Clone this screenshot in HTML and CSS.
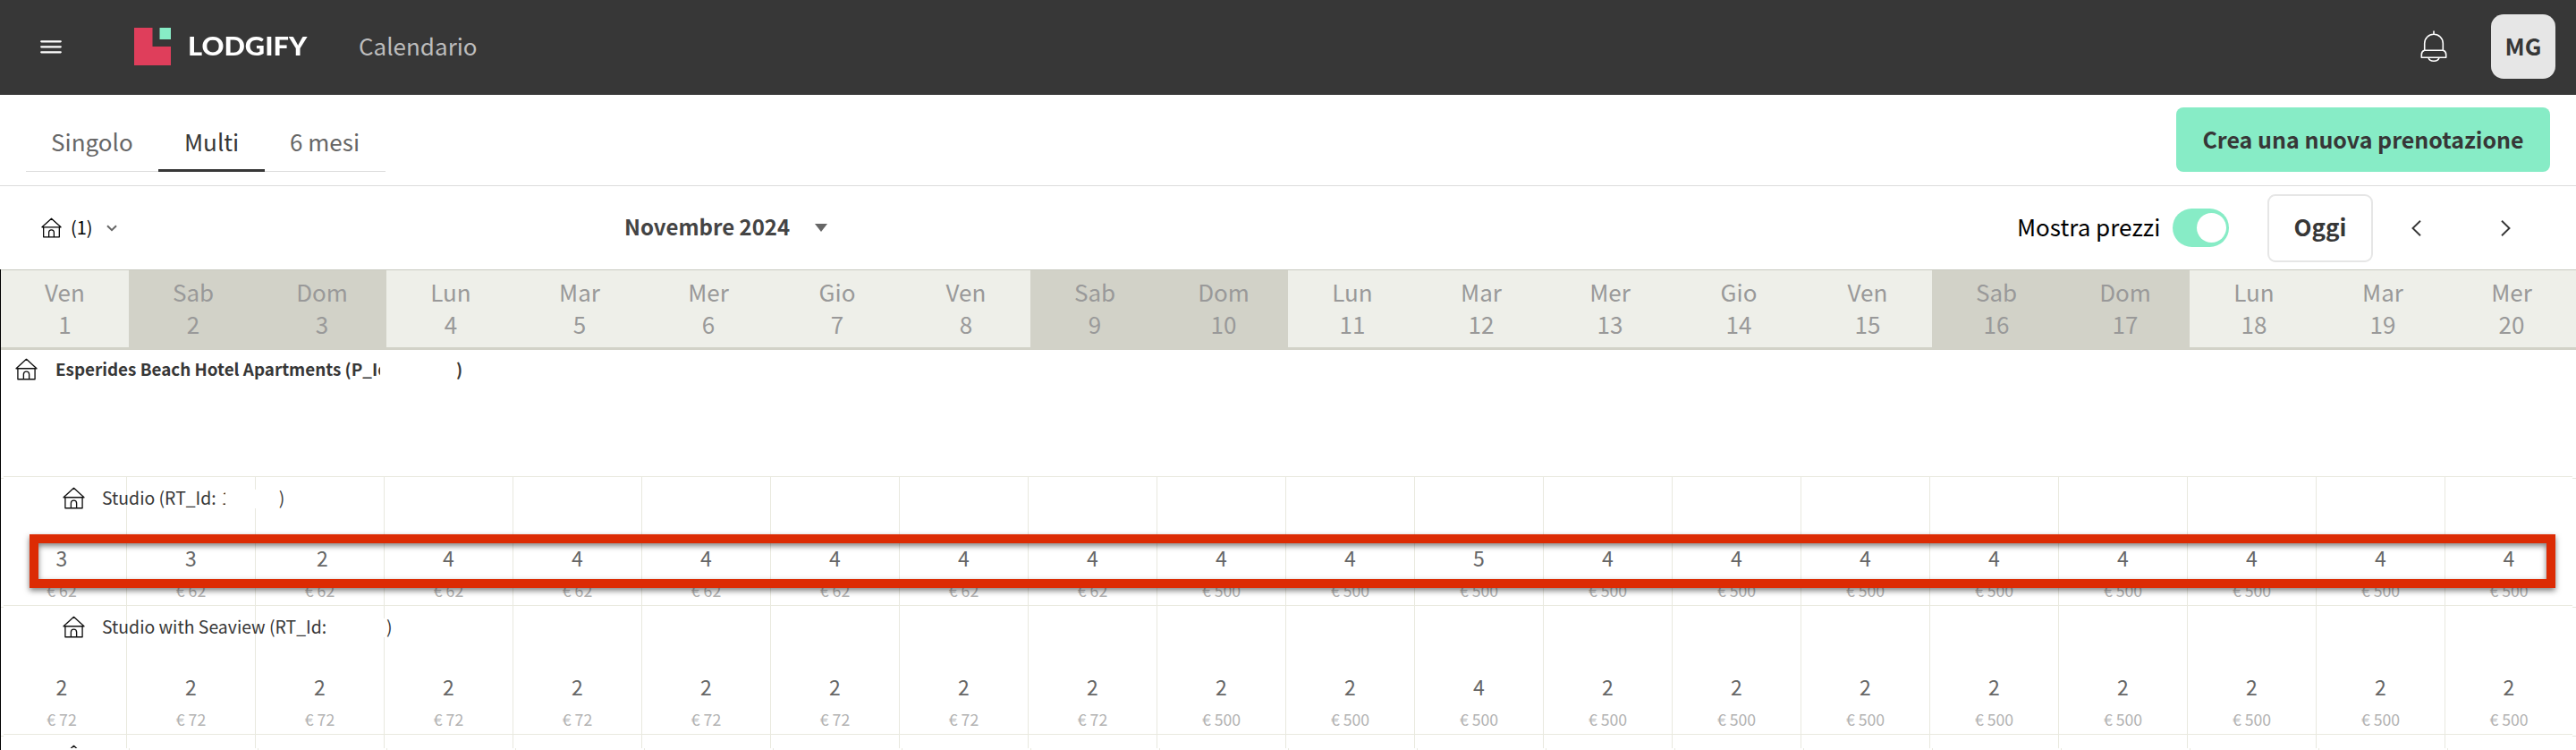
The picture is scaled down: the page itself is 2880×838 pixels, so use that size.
FILE: index.html
```html
<!DOCTYPE html>
<html lang="it">
<head>
<meta charset="utf-8">
<title>Calendario</title>
<link rel="stylesheet" href="styles.css">
</head>
<body>
<svg class="defs" aria-hidden="true">
  <symbol id="house" viewBox="0 0 24 24">
    <path d="M1 11.3 12 1.3 23 11.3ZM2.8 11.3V22.8H21.2V11.3M9 22.8V17.5a3 3 0 0 1 6 0V22.8" fill="none" stroke="currentColor" stroke-width="1.3" stroke-linejoin="round"/>
  </symbol>
</svg>
<header class="topbar">
  <svg class="burger" viewBox="0 0 24 16"><path d="M1.2 2.3H22.8M1.2 8.3H22.8M1.2 14.3H22.8" stroke="#fff" stroke-width="2.2" stroke-linecap="round"/></svg>
  <svg class="mark" viewBox="0 0 41 42"><path d="M0 0H20.5V21H41V42H0Z" fill="#df3e5b"/><path d="M28.500 0H41V13H28.500Z" fill="#87ecc6"/></svg>
  <span class="brand">LODGIFY</span>
  <span class="section">Calendario</span>
  <svg class="bell" viewBox="0 0 30 37" fill="none" stroke="#fff" stroke-width="1.6" stroke-linejoin="round"><path d="M15 .5V4M4.700 22V14.500A10.300 10.300 0 0 1 25.300 14.500V22M4.500 22.300H25.500Q28.700 23.500 28.700 27V30.200H1.300V27Q1.300 23.500 4.500 22.300ZM9 30.500a6.200 5 0 0 0 12 0"/></svg>
  <span class="avatar">MG</span>
</header>
<nav class="tabsbar">
  <div class="tabs">
    <a class="tab">Singolo</a><a class="tab active">Multi</a><a class="tab last">6 mesi</a>
  </div>
  <button class="create">Crea una nuova prenotazione</button>
</nav>
<div class="toolbar">
  <svg class="filter-icon"><use href="#house"/></svg>
  <span class="filter-count">(1)</span>
  <svg class="filter-arrow" viewBox="0 0 12 8"><path d="M1 1.200 6 6.200 11 1.200" fill="none" stroke="#666" stroke-width="2"/></svg>
  <span class="month">Novembre 2024</span>
  <svg class="caret" viewBox="0 0 14 9"><path d="M0 0H14L7 9Z" fill="#666"/></svg>
  <span class="prices-label">Mostra prezzi</span>
  <span class="toggle"><i class="knob"></i></span>
  <button class="today">Oggi</button>
  <svg class="prev" viewBox="0 0 11 18"><path d="M10 .7 1.500 9 10 17.300" fill="none" stroke="#373737" stroke-width="1.900"/></svg>
  <svg class="next" viewBox="0 0 11 18"><path d="M1 .7 9.500 9 1 17.300" fill="none" stroke="#373737" stroke-width="1.900"/></svg>
</div>
<main class="calendar">
  <div class="days" id="days"></div>
  <div class="property">
    <svg class="house"><use href="#house"/></svg>
    <span class="property-name">Esperides Beach Hotel Apartments (P_Id</span><span class="property-end">)</span>
  </div>
  <div class="rooms" id="rooms"></div>
  <div class="ticks"></div>
  <div class="highlight"></div>
</main>
<script src="calendar.js"></script>
</body>
</html>
```
FILE: styles.css
```css
* { box-sizing: border-box; }
body { margin: 0; width: 2880px; height: 838px; overflow: hidden; background: #fff; color: #373737; font-family: "Noto Sans CJK JP", "Noto Sans", sans-serif; font-size: 26px; }
svg { display: block; flex: none; }
button { font: inherit; color: inherit; padding: 0; }
span { white-space: nowrap; }
.defs { position: absolute; width: 0; height: 0; }

.topbar { display: flex; align-items: center; height: 106px; background: #373737; padding: 0 23px 2px 45px; }
.burger { width: 24px; height: 16px; }
.mark { width: 41px; height: 42px; margin-left: 81px; }
.brand { width: 133px; margin-left: 19px; color: #fff; font: 900 27.500px/40px Lato, sans-serif; transform: scaleX(1.120); transform-origin: 0 50%; }
.section { margin-left: 58px; padding-bottom: 3px; color: #bdbdbd; line-height: 40px; }
.bell { width: 30px; height: 37px; margin-left: auto; }
.avatar { width: 72px; height: 72px; margin-left: 49px; border-radius: 14px; background: #e6e6e6; text-align: center; font-weight: 700; line-height: 70px; }

.tabsbar { display: flex; justify-content: space-between; height: 102px; padding: 14px 29px 0; border-bottom: 1px solid #dcdcdc; }
.tabs { display: flex; height: 72px; border-bottom: 1px solid #dcdcdc; color: #666; line-height: 76px; }
.tab { height: 72px; width: 148px; padding-left: 28px; }
.tab.active { width: 119px; padding-left: 29px; border-bottom: 3px solid #373737; color: #373737; }
.tab.last { width: 135px; }
.create { width: 418px; height: 72px; border: 0; border-radius: 8px; background: #87ecc6; font-size: 25px; font-weight: 700; line-height: 70px; padding-bottom: 2px; }

.toolbar { display: flex; align-items: center; height: 93px; color: #000; }
.filter-icon { width: 23px; height: 23px; margin-left: 46px; }
.filter-count { width: 39px; padding: 0 0 3px 10px; font-size: 20px; }
.filter-arrow { width: 12px; height: 8px; margin-left: 11px; }
.month { width: 186px; margin-left: 567px; padding-bottom: 4px; font-size: 24px; font-weight: 700; color: #444; }
.caret { width: 14px; height: 9px; margin-left: 27px; }
.prices-label { width: 158px; margin-left: 1330px; padding-bottom: 4px; }
.toggle { display: flex; align-items: center; justify-content: flex-end; width: 63px; height: 43px; margin-left: 16px; padding-right: 3px; border-radius: 22px; background: #87ecc6; }
.knob { width: 33px; height: 33px; border-radius: 50%; background: #fff; }
.today { width: 118px; height: 76px; margin-left: 43px; border: 2px solid #e6e6e6; border-radius: 9px; background: #fff; color: #373737; font-weight: 700; padding-bottom: 4px; }
.prev { width: 11px; height: 18px; margin-left: 43px; }
.next { width: 11px; height: 18px; margin-left: 89px; }

.calendar { position: relative; height: 537px; border-left: 1px solid #000; background-image: linear-gradient(#e9e9df 1px, transparent 1px), linear-gradient(#e9e9df 1px, transparent 1px); background-size: 4px 144px; background-position: 0 233px, 100% 233px; background-repeat: repeat-y; }
.days { display: grid; grid-template-columns: 143px repeat(19, 144px); height: 90px; border-top: 1px solid #c9cac0; border-bottom: 3px solid #d2d2c8; }
.day { display: grid; grid-template-rows: 36px 36px; padding-top: 6px; background: #eeefe9; color: #999; text-align: center; line-height: 36px; }
.day.weekend { background: #d2d2c8; }

.property { display: flex; height: 141px; padding: 9px 0 0 16px; }
.house { width: 25px; height: 25px; color: #111; }
.property-name { width: 363px; height: 26px; margin-left: 20px; overflow: hidden; font-size: 18.850px; font-weight: 700; line-height: 24px; }
.property-end { margin-left: 85px; font-size: 18.850px; font-weight: 700; line-height: 24px; }

.rooms { overflow: hidden; height: 304px; margin: 0 4px 0 3px; background: #fff; }
.room { position: relative; display: grid; grid-template-columns: 138px repeat(19, 144px); height: 144px; border-top: 1px solid #e9e9df; }
.cell { display: grid; grid-template-rows: 34px 33px; row-gap: 3px; align-content: end; border-right: 1px solid #e9e9df; text-align: center; }
.cell:first-child { padding-right: 7px; }
.cell.end { border-right: 0; padding-right: 2px; }
.cell.shifted .count { padding-left: 6px; }
.count { color: #666; font-size: 23px; line-height: 34px; }
.price { color: #b3b3b3; font-size: 17.700px; line-height: 33px; }
.room-title { position: absolute; left: 66px; top: 11px; display: flex; height: 25px; color: #373737; font-size: 19.400px; line-height: 24px; }
.room-name { margin-left: 19px; }
.remnant { width: 4px; height: 25px; margin-left: 6px; overflow: hidden; }
.redacted { background: #fff; height: 21px; margin-top: 3px; }
.ticks { height: 2px; margin: 0 4px 0 3px; background: linear-gradient(90deg, #e9e9df 1px, #fff 1px) 140px 0 / 144px 2px; }
.highlight { position: absolute; left: 32px; top: 296px; width: 2824px; height: 60px; border: 10px solid #dc2b04; filter: drop-shadow(0 3px 3px rgba(0,0,0,.5)); }
```
FILE: calendar.js
```js
const names = ['Ven', 'Sab', 'Dom', 'Lun', 'Mar', 'Mer', 'Gio'];
const days = document.getElementById('days');
for (let d = 0; d < 20; d++) {
  const name = names[d % 7];
  const weekend = d % 7 === 1 || d % 7 === 2 ? ' weekend' : '';
  days.innerHTML += `<div class="day${weekend}"><span>${name}</span><span>${d + 1}</span></div>`;
}

const rooms = [
  { name: 'Studio (RT_Id:', remnant: '1', gap: 60, shifted: 2, counts: [3,3,2,4,4,4,4,4,4,4,4,5,4,4,4,4,4,4,4,4], price: 62 },
  { name: 'Studio with Seaview (RT_Id:', gap: 67, counts: [2,2,2,2,2,2,2,2,2,2,2,4,2,2,2,2,2,2,2,2], price: 72 },
  { name: '', gap: 0, counts: Array(20).fill(''), price: '' }
];
document.getElementById('rooms').innerHTML = rooms.map(room => {
  const cells = room.counts.map((count, i) =>
    `<div class="cell${i === 19 ? ' end' : ''}${i === room.shifted ? ' shifted' : ''}"><span class="count">${count}</span><span class="price">${count === '' ? '' : '€ ' + (i < 9 ? room.price : 500)}</span></div>`).join('');
  const remnant = room.remnant ? `<span class="remnant">${room.remnant}</span>` : '';
  const tail = room.name ? `${remnant}<span class="redacted" style="width:${room.gap}px"></span><span>)</span>` : '';
  return `<div class="room">${cells}<div class="room-title"><svg class="house"><use href="#house"/></svg><span class="room-name">${room.name}</span>${tail}</div></div>`;
}).join('');
```
